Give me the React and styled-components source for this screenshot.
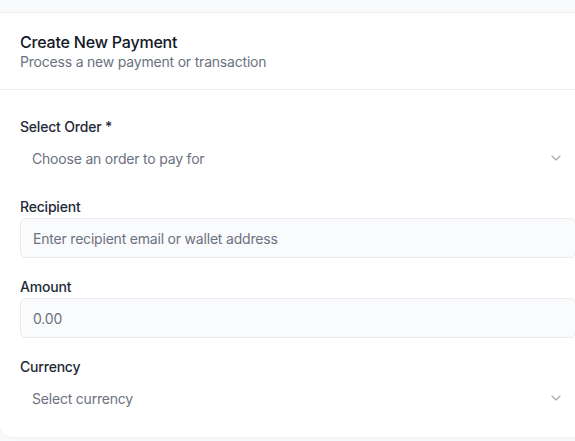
import React from 'react';
import styled, { createGlobalStyle } from 'styled-components';
import { ChevronDown } from 'lucide-react';

const GlobalStyle = createGlobalStyle`
  html, body {
    margin: 0;
    padding: 0;
    background: #f9fafb;
    font-family: Inter, "Noto Sans", sans-serif;
    letter-spacing: -0.2px;
    overflow: hidden;
  }
  * { box-sizing: border-box; }
`;

const Page = styled.div`
  width: 575px;
  height: 441px;
  overflow: hidden;
  padding-top: 12px;
`;

const Card = styled.section`
  width: 597px;
  background: #ffffff;
  border: 1px solid #f0f1f4;
  border-left: none;
  border-radius: 0 12px 12px 12px;
  box-shadow: 0 1px 3px rgba(17, 24, 39, 0.03);
`;

const CardHeader = styled.header`
  padding: 19px 20px 17px;
  border-bottom: 1px solid #eceef1;
`;

const CardTitle = styled.h2`
  margin: 0;
  font-size: 16px;
  line-height: 20px;
  font-weight: 500;
  color: #111827;
`;

const CardSubtitle = styled.p`
  margin: 0;
  font-size: 14px;
  line-height: 20px;
  color: #6b7280;
`;

const Form = styled.form`
  display: flex;
  flex-direction: column;
  gap: 19px;
  padding: 27px 20px 19px;
`;

const Field = styled.div`
  display: flex;
  flex-direction: column;
  gap: 1px;
`;

const Label = styled.label`
  font-size: 14px;
  line-height: 20px;
  font-weight: 500;
  color: #1f2937;
`;

const Input = styled.input`
  height: 40px;
  width: 100%;
  padding: 0 12px;
  border: 1px solid #e8eaee;
  border-radius: 6px;
  background: #fafbfc;
  font-family: inherit;
  font-size: 14px;
  letter-spacing: inherit;
  color: #111827;
  outline: none;

  &::placeholder {
    color: #6b7280;
  }
`;

const SelectTrigger = styled.button`
  display: flex;
  align-items: center;
  justify-content: space-between;
  height: 40px;
  width: 100%;
  padding: 0 12px;
  border: none;
  border-radius: 6px;
  background: transparent;
  font-family: inherit;
  font-size: 14px;
  letter-spacing: inherit;
  color: #6b7280;
  text-align: left;
  cursor: pointer;

  svg {
    color: #a3a9b4;
    flex-shrink: 0;
  }
`;

const Select = ({ placeholder }) => (
  <SelectTrigger type="button">
    <span>{placeholder}</span>
    <ChevronDown size={16} strokeWidth={1.75} />
  </SelectTrigger>
);

export default function App() {
  return (
    <>
      <GlobalStyle />
      <Page>
        <Card>
          <CardHeader>
            <CardTitle>Create New Payment</CardTitle>
            <CardSubtitle>Process a new payment or transaction</CardSubtitle>
          </CardHeader>
          <Form onSubmit={(e) => e.preventDefault()}>
            <Field>
              <Label>Select Order *</Label>
              <Select placeholder="Choose an order to pay for" />
            </Field>
            <Field>
              <Label>Recipient</Label>
              <Input placeholder="Enter recipient email or wallet address" />
            </Field>
            <Field>
              <Label>Amount</Label>
              <Input placeholder="0.00" />
            </Field>
            <Field>
              <Label>Currency</Label>
              <Select placeholder="Select currency" />
            </Field>
          </Form>
        </Card>
      </Page>
    </>
  );
}
